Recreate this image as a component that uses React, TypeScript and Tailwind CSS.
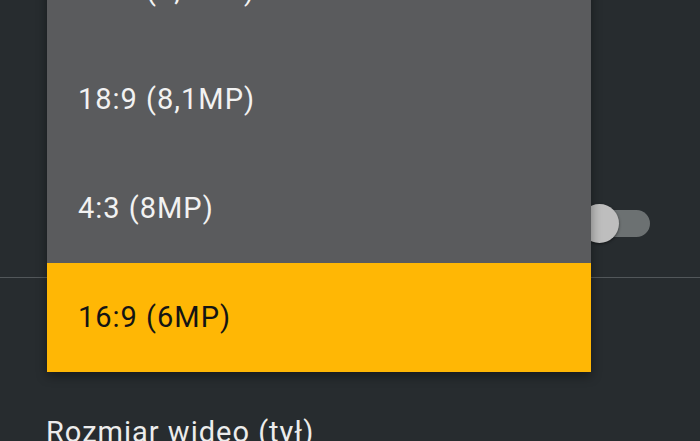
import React from "react";

const items = [
  { label: "16:9 (9,1MP)", selected: false },
  { label: "18:9 (8,1MP)", selected: false },
  { label: "4:3 (8MP)", selected: false },
  { label: "16:9 (6MP)", selected: true },
];

export default function App() {
  return (
    <div
      className="relative w-[700px] h-[441px] overflow-hidden bg-[#272c2f]"
      style={{ fontFamily: "Roboto, 'Noto Sans', sans-serif" }}
    >
      <div className="h-[277px] flex flex-col justify-end">
        <div className="h-[108px] flex items-center justify-end pr-[50px]">
          <div className="relative w-[60px] h-[27px] rounded-full bg-[#6c7172]">
            <div className="absolute left-[-10px] top-[-6px] w-[39px] h-[39px] rounded-full bg-[#bebebe] shadow-[0_1px_3px_rgba(0,0,0,0.5)]" />
          </div>
        </div>
      </div>
      <div className="h-px bg-[#52575a]" />
      <div className="pt-[137px] pl-[46px] text-[29px] leading-[34px] tracking-[1px] text-[#ececec]">
        Rozmiar wideo (tył)
      </div>

      <div className="absolute left-[47px] top-[-64px] w-[544px] bg-[#5a5b5d] shadow-[0_4px_10px_rgba(0,0,0,0.4)] flex flex-col">
        {items.map((it) => (
          <div
            key={it.label}
            className={
              it.selected
                ? "h-[109px] flex items-center pl-[31px] bg-[#ffb705] text-[#141414] text-[29px] tracking-[1px]"
                : "h-[109px] flex items-center pl-[31px] text-[#f2f2f2] text-[29px] tracking-[1px]"
            }
          >
            {it.label}
          </div>
        ))}
      </div>
    </div>
  );
}
